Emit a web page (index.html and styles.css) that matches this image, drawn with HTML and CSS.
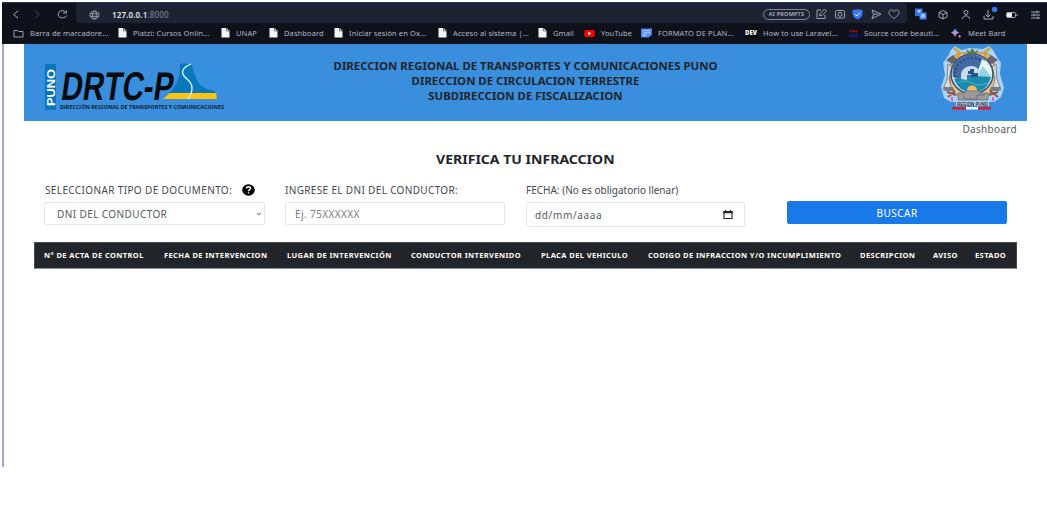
FILE: index.html
```html
<!DOCTYPE html>
<html lang="es">
<head>
<meta charset="utf-8">
<title>Verifica tu infraccion</title>
<link rel="stylesheet" href="styles.css">
</head>
<body>
<svg class="defs" width="0" height="0"><defs>
<symbol id="file" viewBox="0 0 9 10"><path d="M.5 0H5.500L8.500 3V9.500H.5Z" fill="#f4f5f7"/><path d="M5.500 0V3H8.500" fill="none" stroke="#555b68" stroke-width=".8"/></symbol>
</defs></svg>
<div class="window">
  <div class="toolbar">
    <div class="nav">
      <svg width="60" height="20" viewBox="0 0 60 20" fill="none" stroke="#a5a9b6" stroke-width="1"><path d="M7 8L2.500 11.500L7 15"/><path d="M24 8L28.500 11.500L24 15" stroke="#3c404e"/><path d="M54.500 8.800A4.300 3.600 0 1 0 55.500 12.500M55.500 7.500V10H52"/></svg>
    </div>
    <div class="address">
      <svg class="globe" width="11" height="10" viewBox="0 0 11 10" fill="none" stroke="#a5a9b6" stroke-width=".8"><ellipse cx="5.500" cy="5" rx="4.500" ry="4"/><ellipse cx="5.500" cy="5" rx="2" ry="4"/><path d="M1 3.700H10M1 6.300H10"/></svg>
      <span class="url"><b>127.0.0.1</b>:8000</span>
      <span class="prompts">AI PROMPTS</span>
      <svg class="tools" width="90" height="16" viewBox="0 0 90 16" fill="none" stroke="#9da3b3" stroke-width="1"><path d="M6 4H2V12.500H10V9M4.500 10L5 7.500L9.500 3L11.500 5L7.500 9Z"/><rect x="20.500" y="4.500" width="9" height="7.500" rx="1"/><circle cx="25" cy="8.300" r="2"/><path d="M42.500 3.500Q45 5 47 4V8.500Q46.500 11.500 42.500 13Q38.500 11.500 38 8.500V4Q40 5 42.500 3.500Z" fill="#3977f5" stroke="#3977f5"/><path d="M40 8.200L42 10L45 6.500" stroke="#e9efff"/><path d="M57 4L66 8.200L57 12.500L58.500 8.200ZM58.500 8.200H63"/><path d="M79 12.500C74.500 9.500 74 8 74 6.500C74 3.500 78 3 79 5.700C80 3 84 3.500 84 6.500C84 8 83 9.500 79 12.500Z"/></svg>
    </div>
    <svg class="exts" width="132" height="22" viewBox="0 0 132 22" fill="none" stroke="#a5a9b6" stroke-width="1"><rect x="2.500" y="6" width="6.500" height="6.500" fill="#3674e8" stroke="#3674e8"/><rect x="7" y="10" width="6" height="6" fill="#6aa2ff" stroke="#3674e8"/><path d="M4 8H8M6 7V10M8.500 14L10 11.500L11.500 14" stroke="#fff" stroke-width=".8"/><path d="M30 7.500L34 9.500V14L30 16L26 14V9.500ZM26 9.500L30 11.500L34 9.500M30 11.500V16"/><circle cx="53" cy="9.500" r="2"/><path d="M49.500 16C49.500 11.800 56.500 11.800 56.500 16"/><path d="M75 7V13.500M72.500 11.500L75 14L77.500 11.500M71 13V16H80V13"/><circle cx="81.500" cy="6.500" r="2.700" fill="#3c73f2" stroke="none"/><rect x="93.500" y="9.500" width="9" height="5" rx="1"/><rect x="94" y="10" width="5" height="4" fill="#f3f4f8" stroke="none"/><path d="M104 11V13"/><path d="M118 9H127M118 12H127M118 15H127M124 7.500V10.500M121 10.500V13.500M125 13.500V16"/></svg>
  </div>
  <div class="bookmarks">
    <div><svg width="11" height="9" viewBox="0 0 11 9" fill="none" stroke="#9ba0ac"><path d="M1 1.500H4.500L5.500 2.500H10V8H1Z"/></svg><span>Barra de marcadore...</span></div>
    <div><svg width="9" height="10"><use href="#file"/></svg><span>Platzi: Cursos Onlin...</span></div>
    <div><svg width="9" height="10"><use href="#file"/></svg><span>UNAP</span></div>
    <div><svg width="9" height="10"><use href="#file"/></svg><span>Dashboard</span></div>
    <div><svg width="9" height="10"><use href="#file"/></svg><span>Iniciar sesión en Ox...</span></div>
    <div><svg width="9" height="10"><use href="#file"/></svg><span>Acceso al sistema |...</span></div>
    <div><svg width="9" height="10"><use href="#file"/></svg><span>Gmail</span></div>
    <div><svg width="11" height="7" viewBox="0 0 12 8"><rect width="12" height="8" rx="2" fill="#f00"/><path d="M4.500 2L8 4L4.500 6Z" fill="#fff"/></svg><span>YouTube</span></div>
    <div><svg width="11" height="10" viewBox="0 0 12 10"><path d="M0 0H12V7L8.500 10H0Z" fill="#4b87f3"/><path d="M2 2.500H10M2 5H10M2 7.500H6" stroke="#d9e6ff"/></svg><span>FORMATO DE PLAN...</span></div>
    <div><span class="dev">DEV</span><span>How to use Laravel...</span></div>
    <div><svg width="9" height="9" viewBox="0 0 9 9"><path d="M0 1H9V3H0Z" fill="#760b16"/><path d="M0 3H9V5.500H0Z" fill="#101828"/><path d="M0 5.500H9V8H0Z" fill="#151b70"/></svg><span>Source code beauti...</span></div>
    <div><svg width="11" height="11" viewBox="0 0 12 11"><path d="M4.500 0Q5.500 3.500 9 4.500Q5.500 5.500 4.500 9Q3.500 5.500 0 4.500Q3.500 3.500 4.500 0Z" fill="#7d9ff5"/><path d="M0 4.500Q3.500 5.500 4.500 9Q5 5 6 4.500Z" fill="#ec839b"/><path d="M9.500 6.500Q9.900 8.100 11.500 8.500Q9.900 8.900 9.500 10.500Q9.100 8.900 7.500 8.500Q9.100 8.100 9.500 6.500Z" fill="#dc88ad"/></svg><span>Meet Bard</span></div>
  </div>
  <div class="page">
    <header class="banner">
      <svg class="logo" width="186" height="54" viewBox="0 0 186 54">
        <rect x="1" y="3" width="11" height="46" fill="#0875bd"/>
        <text class="puno" transform="translate(10.500 45) rotate(-90)" textLength="37" lengthAdjust="spacingAndGlyphs">PUNO</text>
        <g fill="none" stroke="#259be8" stroke-width=".9"><path d="M151 9A22 18 0 0 1 157 28M154 6A27 22 0 0 1 163 31M157 4A33 25 0 0 1 169 33M160 2A38 29 0 0 1 175 33M163 1A40 30 0 0 1 180 31"/></g>
        <path d="M136 3Q142 1.500 148 4Q149 10 152 17Q156 27 167 29Q171 30 172 32H125Q137 21 136 3Z" fill="#0878bd"/>
        <path d="M126 32H172L173 38H119Z" fill="#ffc20d"/>
        <path d="M147 3C141 5 136 10 140 15C143 19 148 20 148 27Q148 33 144 38" fill="none" stroke="#e7f4fc" stroke-width="1.300"/>
        <text class="drtc" transform="translate(16 38.500) skewX(-8)" textLength="112" lengthAdjust="spacingAndGlyphs">DRTC-P</text>
        <text class="tag" x="16" y="48" textLength="164" lengthAdjust="spacingAndGlyphs">DIRECCIÓN REGIONAL DE TRANSPORTES Y COMUNICACIONES</text>
      </svg>
      <div class="titles"><div>DIRECCION REGIONAL DE TRANSPORTES Y COMUNICACIONES PUNO</div><div>DIRECCION DE CIRCULACION TERRESTRE</div><div>SUBDIRECCION DE FISCALIZACION</div></div>
      <svg class="crest" width="68" height="68" viewBox="0 0 68 68">
        <path d="M17 2L23 6L31 4L45 5L51 2L55 6L59 13L63 19L62 30L66 44L63 53L56 58H13L6 54L3 43L7 31L5 19L10 12L13 6Z" fill="#bcdfff" opacity=".85"/>
        <path d="M20 9L15 13L11 28L13 44L20 52H49L56 44L58 28L54 13L48 9Z" fill="#e7c48a" stroke="#a77b3f"/>
        <path d="M16 4L22 9L19 14M52 4L46 9L49 14" fill="none" stroke="#d8a22e" stroke-width="2.500"/>
        <path d="M8 16L15 11L20 16L14 20ZM60 16L53 11L48 16L54 20Z" fill="#69636a"/>
        <path d="M10 20L14 23L11 35L14 46H5L9 35ZM58 20L54 23L57 35L54 46H63L59 35Z" fill="#dbdcd9" stroke="#81868c"/>
        <path d="M5 43H15L17 47H7ZM63 43H53L51 47H61Z" fill="#777b83"/>
        <ellipse cx="34" cy="30" rx="21" ry="20" fill="#d5e7eb" stroke="#3a4d75" stroke-width="1.500"/>
        <path d="M15 33A19 18 0 0 1 47 16L34 38Z" fill="#4369a5"/>
        <ellipse cx="34" cy="30" rx="17" ry="16" fill="none" stroke="#2c4a7c" stroke-width="2" stroke-dasharray="2 2"/>
        <path d="M44 15A19 18 0 0 1 53 33L37 36Z" fill="#e4f5f7"/><path d="M45 22L54 34H37Z" fill="#94d2df"/>
        <path d="M16 35Q29 31 53 33Q49 48 34 49Q20 47 16 35Z" fill="#198cad"/>
        <path d="M23 35V30Q25 22 34 22Q41 23 42 29L38 33L34 31H29V36Z" fill="#ccdce8"/>
        <path d="M32 25H36V29H40V33H33V30H30V27H32Z" fill="#24568c"/>
        <path d="M20 39Q27 35 34 39T50 39" fill="none" stroke="#54b5ca"/>
        <path d="M28 5L30 10H38L41 5L37 8L34 4L32 8Z" fill="#587b3c"/>
        <ellipse cx="34" cy="46" rx="5" ry="4.500" fill="#f0b863"/>
        <path d="M20 49H27V47H42V49H50V56H20Z" fill="#9b9b9c" stroke="#747980"/><path d="M26 51V55H39V51H47" fill="none" stroke="#686c71"/>
        <path d="M9 48L18 51M10 53L17 47M51 51L60 48M52 47L60 53" fill="none" stroke="#955044" stroke-width="2"/>
        <path d="M14 53V57M55 53V57" stroke="#ec58b8" stroke-width="2"/>
        <rect x="18" y="58" width="33" height="4" fill="#bddcf7"/><text class="region" x="19" y="61.500" textLength="31" lengthAdjust="spacingAndGlyphs">REGION PUNO</text>
        <path d="M14 63H28V65.500H14ZM40 63H53V65.500H40Z" fill="#ed1717"/><path d="M28 63H40V65.500H28Z" fill="#fff"/>
      </svg>
    </header>
    <div class="crumb"><span>Dashboard</span></div>
    <h1>VERIFICA TU INFRACCION</h1>
    <form class="search">
      <div><div class="label l1"><span>SELECCIONAR TIPO DE DOCUMENTO:</span><svg width="13" height="12" viewBox="0 0 13 12"><ellipse cx="6.500" cy="6" rx="6.300" ry="5.700"/><path d="M4.500 4.500Q4.500 2.800 6.500 2.800Q8.500 2.800 8.500 4.300Q8.500 5.100 7.500 5.600Q6.500 6.100 6.500 7.200M6.500 8.200V9.500" fill="none" stroke="#fff" stroke-width="1.400"/></svg></div><div class="field select"><span>DNI DEL CONDUCTOR</span><svg width="6" height="4" viewBox="0 0 6 4"><path d="M1 .8L3 2.700L5 .8" fill="none" stroke="#666"/></svg></div></div>
      <div><div class="label l2"><span>INGRESE EL DNI DEL CONDUCTOR:</span></div><div class="field input"><span>Ej. 75XXXXXX</span></div></div>
      <div><div class="label l3"><span>FECHA: (No es obligatorio llenar)</span></div><div class="field date"><span>dd/mm/aaaa</span><svg width="10" height="10" viewBox="0 0 10 10"><path d="M1 1.500H9V8.500H1Z" fill="none" stroke="#222" stroke-width="1.100"/><path d="M.5 1H9.500V3.200H.5ZM2 0H3V2H2ZM7 0H8V2H7Z" fill="#222"/></svg></div></div>
      <div class="action"><div class="button">BUSCAR</div></div>
    </form>
    <div class="thead"><span>N° DE ACTA DE CONTROL</span><span>FECHA DE INTERVENCION</span><span>LUGAR DE INTERVENCIÓN</span><span>CONDUCTOR INTERVENIDO</span><span>PLACA DEL VEHICULO</span><span>CODIGO DE INFRACCION Y/O INCUMPLIMIENTO</span><span>DESCRIPCION</span><span>AVISO</span><span>ESTADO</span></div>
  </div>
</div>
</body>
</html>
```
FILE: styles.css
```css
* { box-sizing: border-box; }
body { margin: 0; width: 1047px; height: 506px; overflow: hidden; padding: 2px 0 0 2px; background: #fff; font-family: "Noto Sans", sans-serif; color: #212529; white-space: nowrap; }
.defs { display: none; }
svg { display: block; flex: none; }
.window { height: 465px; display: flex; flex-direction: column; }
.toolbar { height: 22px; flex: none; background: #0f121b; border-top: 1px solid #26356b; display: flex; padding-left: 9px; }
.nav { width: 65px; }
.address { width: 831px; height: 20px; background: #1e2333; border-radius: 3px; display: flex; align-items: center; padding: 3px 2px 0 13px; }
.url { margin: -1px 0 0 12px; font-size: 8px; color: #858b9c; letter-spacing: .15px; }
.url b { color: #e4e7ef; font-weight: 600; }
.prompts { margin-left: auto; width: 47px; height: 11px; border: 1px solid #80879a; border-radius: 6px; color: #b4bac9; font-size: 5.500px; line-height: 9px; font-weight: 600; text-align: center; letter-spacing: .25px; margin-top: -1px; }
.tools { margin-left: 5px; margin-top: -2px; }
.exts { margin: 0 0 0 6px; }
.bookmarks { height: 20px; flex: none; background: #0e1119; display: grid; grid-template-columns: 105px 103px 48px 65px 104px 100px 46px 57px 104px 104px 102px 90px; padding: 0 0 1px 11px; border-bottom: 1px solid #101b2b; }
.bookmarks div { display: flex; align-items: center; font-size: 7.500px; color: #b3b8c5; letter-spacing: .1px; }
.bookmarks span { margin-left: 6px; }
.bookmarks .dev { background: #000; color: #fff; margin: 0; font-size: 6px; line-height: 8px; font-weight: 900; width: 12px; letter-spacing: 0; }
.page { flex: 1; border-left: 2px solid #9da9ce; padding: 0 20px; }
.banner { height: 77px; border-top: 1px solid #4387c8; background: #398ede; display: grid; grid-template-columns: 186px 1fr 186px; padding: 0 20px; }
.logo { margin-top: 16px; overflow: visible; }
.puno { font: bold 11px "Liberation Sans", sans-serif; fill: #fff; }
.drtc { font: bold 40px "Liberation Sans", sans-serif; fill: #080b0e; }
.tag { font: bold 5.800px "Open Sans", sans-serif; fill: #101e2c; }
.titles { padding: 14px 0 0; text-align: center; font-size: 9.900px; font-weight: 700; line-height: 15px; transform: scaleX(1.155); }
.crest { justify-self: end; margin: -1px 1px 0 0; }
.region { font: bold 4.500px "Liberation Sans", sans-serif; fill: #17212f; }
.crumb { height: 15px; display: flex; align-items: center; justify-content: flex-end; padding-right: 10px; font-size: 10px; color: #555a60; letter-spacing: .3px; }
h1 { width: fit-content; margin: 0 auto; height: 45px; padding-top: 15px; line-height: 18px; text-align: center; font-size: 12px; font-weight: 700; transform: scaleX(1.17); }
.search { height: 61px; margin: 0 0 0 20px; display: grid; grid-template-columns: 221px 221px 220px 220px; column-gap: 20px; }
.label { height: 17px; display: flex; align-items: center; font-size: 10px; color: #44494e; margin-bottom: 4px; letter-spacing: .34px; }
.l1 { padding-left: 1px; letter-spacing: .37px; }
.l1 svg { margin-left: 10px; }
.l3 { letter-spacing: 0; }
.field { height: 23px; border: 1px solid #e4e7ea; border-radius: 2px; display: flex; align-items: center; justify-content: space-between; font-size: 10px; color: #555b61; letter-spacing: .4px; }
.select { padding: 0 2px 0 12px; }
.input { padding-left: 9px; color: #777d83; width: 220px; }
.date { width: 219px; height: 25px; padding: 0 11px 0 8px; letter-spacing: .65px; }
.action { margin-left: 21px; width: 220px; padding-top: 20px; }
.button { height: 23px; border-radius: 2px; background: #187ae9; color: #fff; font-size: 10px; line-height: 24px; text-align: center; letter-spacing: .5px; }
.thead { margin: 0 10px; height: 27px; background: #212529; border: 1px solid #454a50; border-bottom: 1px solid #909399; padding: 0 0 2px 9px; color: #fff; font-size: 7.500px; font-weight: 700; letter-spacing: .4px; display: grid; grid-template-columns: 120px 123px 124px 130px 107px 212px 73px 42px 40px; align-items: center; }
```
